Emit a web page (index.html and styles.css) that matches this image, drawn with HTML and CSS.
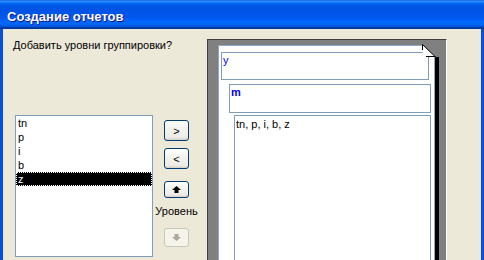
FILE: index.html
```html
<!DOCTYPE html>
<html lang="ru">
<head>
<meta charset="utf-8">
<title>Создание отчетов</title>
<link rel="stylesheet" href="styles.css">
</head>
<body>
<div class="window">
  <div class="titlebar"><span class="title">Создание отчетов</span></div>
  <div class="client">
    <div class="leftpane">
      <div class="prompt">Добавить уровни группировки?</div>
      <div class="row">
        <ul class="list">
          <li>tn</li>
          <li>p</li>
          <li>i</li>
          <li>b</li>
          <li class="sel">z</li>
        </ul>
        <div class="btns">
          <button class="btn move">&gt;</button>
          <button class="btn move second">&lt;</button>
          <button class="btn arrow up"><svg width="9" height="7" viewBox="0 0 9 7"><path d="M4.5 0 L9 4 H6.5 V7 H2.5 V4 H0 Z" fill="#000"/></svg></button>
          <div class="lvl">Уровень</div>
          <button class="btn arrow down" disabled><svg width="9" height="7" viewBox="0 0 9 7"><path d="M2.5 0 H6.5 V3 H9 L4.5 7 L0 3 H2.5 Z" fill="#ACA899"/></svg></button>
        </div>
      </div>
    </div>
    <div class="preview">
      <div class="page">
        <div class="grp g1"><span class="blue">y</span></div>
        <div class="grp g2"><b class="blue">m</b></div>
        <div class="grp g3">tn, p, i, b, z</div>
        <svg class="fold" width="14" height="14" viewBox="0 0 14 14">
          <polygon points="0,0 14,0 14,14" fill="#808080"/>
          <polygon points="0.5,0.5 0.5,12.5 13,12.5" fill="#fff"/>
          <path d="M0.5 0.5 L13.5 13 M0.5 0.5 V6 M4 12.5 H13.5" stroke="#000" stroke-width="1" fill="none"/>
        </svg>
      </div>
    </div>
  </div>
</div>
</body>
</html>
```
FILE: styles.css
```css
html, body {
  margin: 0;
  padding: 0;
  background: #ECE9D8;
}

.window {
  width: 484px;
  height: 260px;
  overflow: hidden;
  font-family: "Liberation Sans", Arial, sans-serif;
  font-size: 11px;
  color: #000;
}

.titlebar {
  height: 29px;
  box-sizing: border-box;
  padding: 5px 0 0 7px;
  line-height: 23px;
  background: linear-gradient(to bottom, #0058EE 0%, #3A93FF 4%, #288EFF 6%, #127DFF 8%, #036FFC 10%, #0262EE 14%, #0057E5 20%, #0054E3 24%, #0055EB 56%, #005BF5 66%, #026AFE 76%, #0062EF 86%, #0052D6 92%, #0040AB 94%, #003092 100%);
}

.title {
  font-weight: bold;
  font-size: 13px;
  color: #fff;
  text-shadow: 1px 1px #0F1089;
}

.client {
  display: flex;
  height: 231px;
  box-sizing: border-box;
  padding-left: 10px;
  background: #ECE9D8;
  border-left: 3px solid #0550E0;
  border-right: 3px solid #0550E0;
}

.leftpane {
  width: 194px;
  flex: none;
}

.prompt {
  margin-top: 9px;
  line-height: 14px;
  white-space: nowrap;
}

.row {
  display: flex;
  margin-top: 63px;
}

.list {
  margin: 0 0 0 2px;
  padding: 0;
  list-style: none;
  width: 138px;
  height: 142px;
  box-sizing: border-box;
  border: 1px solid #7F9DB9;
  background: #fff;
  flex: none;
}

.list li {
  height: 14px;
  line-height: 14px;
  padding-left: 2px;
}

.list li.sel {
  background: #000;
  color: #fff;
  outline: 1px dotted #fff;
  outline-offset: -1px;
}

.btns {
  margin-left: 11px;
  width: 25px;
  flex: none;
  display: flex;
  flex-direction: column;
  align-items: center;
  padding-top: 5px;
}

.btn {
  width: 25px;
  box-sizing: border-box;
  padding: 0;
  margin: 0;
  border: 1px solid #003C74;
  border-radius: 3px;
  background: linear-gradient(to bottom, #FFFFFF 0%, #F4F3EE 40%, #ECEBE6 86%, #D6D0C5 100%);
  font-family: "Liberation Sans", Arial, sans-serif;
  font-size: 11px;
  color: #000;
  display: flex;
  align-items: center;
  justify-content: center;
  flex: none;
}

.btn.move {
  height: 21px;
}

.btn.second {
  margin-top: 7px;
}

.btn.up {
  margin-top: 12px;
  height: 17px;
}

.btn.down {
  margin-top: 10px;
  height: 19px;
  border-color: #C9C7BA;
  background: #F5F4EA;
}

.btn svg {
  display: block;
}

.lvl {
  margin-top: 6px;
  line-height: 14px;
  white-space: nowrap;
}

.preview {
  flex: none;
  margin-top: 10px;
  width: 240px;
  height: 260px;
  box-sizing: border-box;
  background: #808080;
  border-top: 1px solid #404040;
  border-left: 1px solid #404040;
  border-right: 1px solid #fff;
  padding: 5px 0 0 10px;
}

.page {
  position: relative;
  width: 217px;
  height: 260px;
  box-sizing: border-box;
  background: #fff;
  border: 1px solid #8FA8C8;
  box-shadow: 4px 12px 0 #000;
  padding: 6px 0 0 2px;
}

.grp {
  box-sizing: border-box;
  border: 1px solid #7F9DB9;
  padding-left: 1px;
  line-height: 14px;
}

.g1 {
  width: 208px;
  height: 28px;
}

.g2 {
  margin-left: 8px;
  margin-top: 4px;
  width: 202px;
  height: 29px;
}

.g3 {
  margin-left: 13px;
  margin-top: 2px;
  width: 197px;
  height: 200px;
  padding-top: 1px;
}

.blue {
  color: #0000FF;
}

.fold {
  position: absolute;
  top: -2px;
  right: -2px;
  display: block;
}
```
